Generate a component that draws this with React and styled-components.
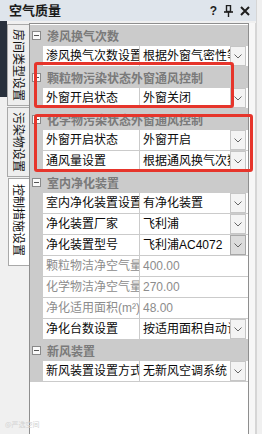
import React from 'react';
import styled, { createGlobalStyle } from 'styled-components';

const GlobalStyle = createGlobalStyle`
  html, body {
    margin: 0;
    padding: 0;
    background: #f0f0f0;
  }
  body {
    font-family: "Liberation Sans", "Noto Sans CJK SC", sans-serif;
  }
`

const Window = styled.div`
  position: relative;
  width: 262px;
  height: 434px;
  display: flex;
  background: #f0f0f0;
  overflow: hidden;
`

const Main = styled.div`
  width: 256px;
  display: flex;
  flex-direction: column;
  border-right: 1px solid #d6d6d6;
`

const TitleBar = styled.div`
  height: 21px;
  display: flex;
  align-items: center;
  padding: 0 6px 0 9px;
  background: #dfe5ec;
`

const Title = styled.div`
  flex: 1;
  font-size: 13px;
  font-weight: bold;
  color: #1b1b1b;
  line-height: 21px;
`

const TitleButtons = styled.div`
  display: flex;
  align-items: center;
  gap: 7px;
  color: #1e1e1e;
  font-size: 12px;
  font-weight: bold;
`

const Body = styled.div`
  flex: 1;
  display: flex;
  padding-top: 2px;
`

const SideEdge = styled.div`
  width: 7px;
  display: flex;
  flex-direction: column;
`

const DarkEdge = styled.div`
  height: 76px;
  margin-top: -2px;
  background: #28303c;
`

const TabStrip = styled.div`
  width: 24px;
  display: flex;
  flex-direction: column;
  align-items: flex-end;
`

const Tab = styled.div`
  width: 22px;
  box-sizing: border-box;
  writing-mode: vertical-rl;
  text-orientation: sideways;
  font-family: "Noto Sans CJK SC", sans-serif;
  font-size: 12px;
  line-height: 20px;
  color: #111;
  padding: ${p => (p.active ? '5px 0 9px' : '4px 0')};
  margin-top: 1px;
  background: ${p => (p.active ? '#ffffff' : '#eeeeee')};
  border: 1px solid #a9a9a9;
  border-right: ${p => (p.active ? '1px solid #ffffff' : 'none')};
  margin-right: ${p => (p.active ? '-1px' : '0')};
`

const Panel = styled.div`
  flex: 1;
  display: flex;
  background: #f7f7f7;
`

const GridBox = styled.div`
  width: 218px;
  background: #ffffff;
  border: 1px solid #8e8e8e;
  border-bottom: none;
  padding-top: 1px;
`

const Grid = styled.div`
  display: flex;
  flex-direction: column;
  font-size: 12px;
  font-family: "Liberation Sans", "Noto Sans CJK SC", sans-serif;
`

const Row = styled.div`
  height: 20px;
  display: grid;
  grid-template-columns: 13px 97px 1fr;
  border-bottom: 1px solid #cbcbcb;
  background: #cbcbcb;
`

const CatRow = styled.div`
  height: 20px;
  display: flex;
  align-items: center;
  background: #cbcbcb;
  border-bottom: 1px solid #cbcbcb;
  font-weight: bold;
  color: #7a7a7a;
`

const Toggle = styled.div`
  width: 13px;
  display: flex;
  justify-content: center;
  flex-shrink: 0;
  margin-right: 4px;
`

const Minus = styled.span`
  width: 7px;
  height: 7px;
  border: 1px solid #8a8a8a;
  background: #fafafa;
  display: flex;
  align-items: center;
  justify-content: center;
  &::after {
    content: '';
    width: 5px;
    height: 1px;
    background: #555;
  }
`

const Name = styled.div`
  background: #fff;
  padding-left: 3px;
  line-height: 20px;
  white-space: nowrap;
  overflow: hidden;
  border-right: 1px solid #cbcbcb;
  color: ${p => (p.dim ? '#8c8c8c' : '#0a0a0a')};
`

const Value = styled.div`
  background: #fff;
  display: flex;
  min-width: 0;
`

const ValueText = styled.div`
  flex: 1;
  min-width: 0;
  padding-left: 3px;
  line-height: 20px;
  white-space: nowrap;
  overflow: hidden;
  color: ${p => (p.dim ? '#8c8c8c' : '#0a0a0a')};
`

const DropButton = styled.div`
  width: 16px;
  box-sizing: border-box;
  display: flex;
  align-items: center;
  justify-content: center;
  background: ${p => (p.active ? '#dcdcdc' : '#f4f4f4')};
  border: 1px solid ${p => (p.active ? '#a8a8a8' : '#c6c6c6')};
  margin-right: 2px;
`

const Gap = styled.div`
  width: 6px;
  background: #f7f7f7;
  border-right: 1px solid #d6d6d6;
`

const Highlight = styled.div`
  position: absolute;
  box-sizing: border-box;
  border: 3px solid #e6352b;
  border-radius: 3px;
  pointer-events: none;
`

const Watermark = styled.div`
  position: absolute;
  left: 5px;
  bottom: 5px;
  font-size: 7px;
  color: #d2d2d2;
  font-family: "Noto Sans CJK SC", sans-serif;
`

const Chevron = () => (
  <svg width="8" height="5" viewBox="0 0 8 5">
    <polyline points="0.5,0.5 4,4 7.5,0.5" fill="none" stroke="#666" strokeWidth="1" />
  </svg>
)

const Pin = () => (
  <svg width="9" height="12" viewBox="0 0 9 12">
    <rect x="2.5" y="0.5" width="4" height="6" fill="none" stroke="#1e1e1e" strokeWidth="1.4" />
    <line x1="0" y1="7" x2="9" y2="7" stroke="#1e1e1e" strokeWidth="1.6" />
    <line x1="4.5" y1="7" x2="4.5" y2="12" stroke="#1e1e1e" strokeWidth="1.4" />
  </svg>
)

const Close = () => (
  <svg width="10" height="10" viewBox="0 0 10 10">
    <path d="M1 1 L9 9 M9 1 L1 9" stroke="#1e1e1e" strokeWidth="2" />
  </svg>
)

const rows = [
  { cat: '渗风换气次数' },
  { name: '渗风换气次数设置', value: '根据外窗气密性等级', dd: true },
  { cat: '颗粒物污染状态外窗通风控制' },
  { name: '外窗开启状态', value: '外窗关闭', dd: true },
  { cat: '化学物污染状态外窗通风控制' },
  { name: '外窗开启状态', value: '外窗开启', dd: true },
  { name: '通风量设置', value: '根据通风换气次数', dd: true },
  { cat: '室内净化装置' },
  { name: '室内净化装置设置', value: '有净化装置', dd: true },
  { name: '净化装置厂家', value: '飞利浦', dd: true },
  { name: '净化装置型号', value: '飞利浦AC4072', dd: true, active: true },
  { name: '颗粒物洁净空气量', value: '400.00', dim: true },
  { name: '化学物洁净空气量', value: '270.00', dim: true },
  { name: '净化适用面积(m²)', value: '48.00', dim: true },
  { name: '净化台数设置', value: '按适用面积自动计算', dd: true },
  { cat: '新风装置' },
  { name: '新风装置设置方式', value: '无新风空调系统', dd: true },
]

const App = () => (
  <Window>
    <GlobalStyle />
    <Main>
      <TitleBar>
        <Title>空气质量</Title>
        <TitleButtons>
          <span>?</span>
          <Pin />
          <Close />
        </TitleButtons>
      </TitleBar>
      <Body>
        <SideEdge>
          <DarkEdge />
        </SideEdge>
        <TabStrip>
          <Tab>房间类型设置</Tab>
          <Tab>污染物设置</Tab>
          <Tab active>控制措施设置</Tab>
        </TabStrip>
        <Panel>
          <GridBox>
            <Grid>
              {rows.map((r, i) =>
                r.cat ? (
                  <CatRow key={i}>
                    <Toggle><Minus /></Toggle>
                    {r.cat}
                  </CatRow>
                ) : (
                  <Row key={i}>
                    <span />
                    <Name dim={r.dim}>{r.name}</Name>
                    <Value>
                      <ValueText dim={r.dim}>{r.value}</ValueText>
                      {r.dd && (
                        <DropButton active={r.active}>
                          <Chevron />
                        </DropButton>
                      )}
                    </Value>
                  </Row>
                )
              )}
            </Grid>
          </GridBox>
          <Gap />
        </Panel>
      </Body>
    </Main>
    <Highlight style={{ left: 34, top: 62, width: 200, height: 46 }} />
    <Highlight style={{ left: 34, top: 114, width: 219, height: 58 }} />
    <Watermark>@严选空间</Watermark>
  </Window>
)

export default App;
